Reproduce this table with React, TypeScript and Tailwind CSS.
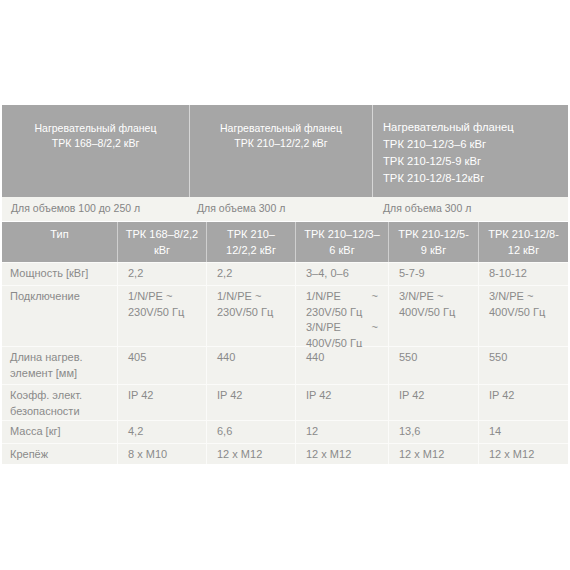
import React from 'react';

const font = { fontFamily: '"Liberation Sans", Arial, sans-serif' };

type Row = { label: React.ReactNode; values: React.ReactNode[]; h: string };

const headers: React.ReactNode[] = [
  'Тип',
  <>ТРК 168–8/2,2<br />кВг</>,
  <>ТРК 210–<br />12/2,2 кВг</>,
  <>ТРК 210–12/3–<br />6 кВг</>,
  <>ТРК 210-12/5-<br />9 кВг</>,
  <>ТРК 210-12/8-<br />12 кВг</>,
];

const Spread = ({ left }: { left: string }) => (
  <div className="flex justify-between">
    <span>{left}</span>
    <span>~</span>
  </div>
);

const rows: Row[] = [
  { label: 'Мощность [кВг]', values: ['2,2', '2,2', '3–4, 0–6', '5-7-9', '8-10-12'], h: 'h-[22px]' },
  {
    label: 'Подключение',
    values: [
      <>1/N/PE ~<br />230V/50 Гц</>,
      <>1/N/PE ~<br />230V/50 Гц</>,
      <>
        <Spread left="1/N/PE" />
        <div>230V/50 Гц</div>
        <Spread left="3/N/PE" />
        <div>400V/50 Гц</div>
      </>,
      <>3/N/PE ~<br />400V/50 Гц</>,
      <>3/N/PE ~<br />400V/50 Гц</>,
    ],
    h: 'h-[60px]',
  },
  { label: <>Длина нагрев.<br />элемент [мм]</>, values: ['405', '440', '440', '550', '550'], h: 'h-[37px]' },
  { label: <>Коэфф. элект.<br />безопасности</>, values: ['IP 42', 'IP 42', 'IP 42', 'IP 42', 'IP 42'], h: 'h-[35px]' },
  { label: 'Масса [кг]', values: ['4,2', '6,6', '12', '13,6', '14'], h: 'h-[22px]' },
  { label: 'Крепёж', values: ['8 x M10', '12 x M12', '12 x M12', '12 x M12', '12 x M12'], h: 'h-[20px]' },
];

const cols = 'grid grid-cols-[116px_89px_89px_93px_90px_89px]';

export default function App() {
  return (
    <div className="w-[570px] h-[570px] bg-white pt-[105px] px-[2px]" style={font}>
      {/* Top block: flange models */}
      <div className="grid grid-cols-[188px_183px_195px]">
        <div className="h-[92px] bg-[#a6a6a6] border-r border-[#d6d6d6] pt-[16px] text-center text-[10.5px] leading-[15px] text-white">
          Нагревательный фланец<br />ТРК 168–8/2,2 кВг
        </div>
        <div className="h-[92px] bg-[#a6a6a6] border-r border-[#d6d6d6] pt-[16px] text-center text-[10.5px] leading-[15px] text-white">
          Нагревательный фланец<br />ТРК 210–12/2,2 кВг
        </div>
        <div className="h-[92px] bg-[#a6a6a6] pt-[14px] pl-[10px] text-[11.25px] leading-[17px] text-white">
          Нагревательный фланец<br />ТРК 210–12/3–6 кВг<br />ТРК 210-12/5-9 кВг<br />ТРК 210-12/8-12кВг
        </div>
        <div className="h-[24px] bg-[#f3f3ef] pl-[9px] flex items-center text-[10.5px] text-[#858585]">Для объемов 100 до 250 л</div>
        <div className="h-[24px] bg-[#f3f3ef] pl-[7px] flex items-center text-[10.5px] text-[#858585]">Для объема 300 л</div>
        <div className="h-[24px] bg-[#f3f3ef] pl-[10px] flex items-center text-[10.5px] text-[#858585]">Для объема 300 л</div>
      </div>

      {/* Specs table */}
      <div className="mt-[1px] text-[11px] leading-[15.5px]">
        <div className={cols}>
          {headers.map((h, i) => (
            <div
              key={i}
              className={`h-[40px] bg-[#a6a6a6] pt-[5px] text-center text-white ${i < 5 ? 'border-r border-[#cfcfcf]' : ''}`}
            >
              {h}
            </div>
          ))}
        </div>
        {rows.map((r, ri) => (
          <div key={ri} className={`${cols} border-t border-[#fbfbf9]`}>
            <div className={`${r.h} bg-[#f2f2ee] pl-[8px] pt-[3px] text-[#8a8a8a] border-r border-[#fbfbf9]`}>{r.label}</div>
            {r.values.map((v, vi) => (
              <div
                key={vi}
                className={`${r.h} bg-[#f2f2ee] pl-[10px] pr-[10px] pt-[3px] text-[#8a8a8a] ${vi < 4 ? 'border-r border-[#fbfbf9]' : ''}`}
              >
                {v}
              </div>
            ))}
          </div>
        ))}
      </div>
    </div>
  );
}
